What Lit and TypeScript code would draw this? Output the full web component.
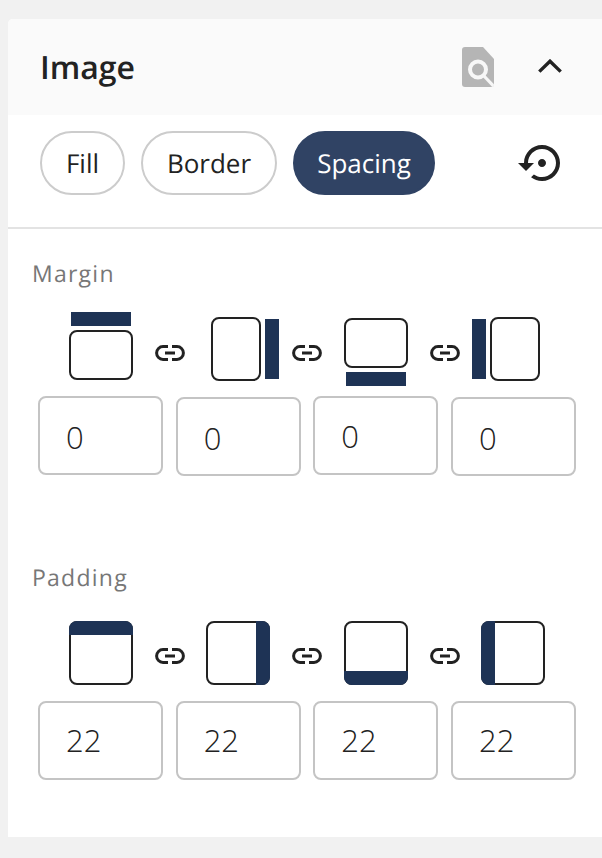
import { LitElement, html, css, svg } from "lit";
import { customElement } from "lit/decorators.js";

const NAVY = "#1e3355";
const INK = "#222222";

const box = (x: number, y: number, w: number, h: number) =>
  svg`<rect x=${x + 1} y=${y + 1} width=${w - 2} height=${h - 2} rx="7" fill="#fff" stroke=${INK} stroke-width="2"/>`;
const bar = (x: number, y: number, w: number, h: number) =>
  svg`<rect x=${x} y=${y} width=${w} height=${h} fill=${NAVY}/>`;
const fillPath = (d: string) => svg`<path d=${d} fill=${NAVY}/>`;

const frame = (vx: number, vy: number, h: number, body: unknown) =>
  html`<svg class="side" style="height:${h}px" viewBox="${vx} ${vy} 84 ${h}">${body}</svg>`;

const link = (tight: boolean) => html`<svg class="link ${tight ? "tight" : ""}" viewBox="0 0 30 16">
  <path d="M13 1.6H8a6.4 6.4 0 0 0 0 12.8h5M17 1.6h5a6.4 6.4 0 0 1 0 12.8h-5M10 8h10" fill="none" stroke=${INK} stroke-width="3"/>
</svg>`;

const marginIcons = [
  frame(59, 312, 74, svg`${bar(71, 312, 60, 14)}${box(69, 330, 64, 50)}`),
  frame(196, 312, 74, svg`${box(211, 317, 50, 64)}${bar(265, 319, 14, 60)}`),
  frame(334, 312, 74, svg`${box(344, 318, 64, 50)}${bar(346, 372, 60, 14)}`),
  frame(471, 312, 74, svg`${bar(472, 319, 14, 60)}${box(490, 317, 50, 64)}`),
];

const paddingIcons = [
  frame(59, 621, 64, svg`${box(69, 621, 64, 64)}${fillPath("M69 635v-6a8 8 0 0 1 8-8h48a8 8 0 0 1 8 8v6z")}`),
  frame(196, 621, 64, svg`${box(206, 621, 64, 64)}${fillPath("M256 621h6a8 8 0 0 1 8 8v48a8 8 0 0 1-8 8h-6z")}`),
  frame(334, 621, 64, svg`${box(344, 621, 64, 64)}${fillPath("M344 671v6a8 8 0 0 0 8 8h48a8 8 0 0 0 8-8v-6z")}`),
  frame(471, 621, 64, svg`${box(481, 621, 64, 64)}${fillPath("M495 621h-6a8 8 0 0 0-8 8v48a8 8 0 0 0 8 8h6z")}`),
];

@customElement("app-root")
export class AppRoot extends LitElement {
  static styles = css`
    :host {
      display: block;
      background: #f1f1f1;
      padding: 19px 0 21px 8px;
      font-family: "Open Sans", "Noto Sans", sans-serif;
      color: #222;
      text-rendering: geometricPrecision;
    }
    .panel {
      background: #fff;
      border-top-left-radius: 5px;
      height: 818px;
      overflow: hidden;
      opacity: 0.999;
    }
    .head {
      height: 96px;
      background: #fafafa;
      display: flex;
      align-items: center;
      padding-left: 32px;
    }
    .title {
      font-size: 32px;
      font-weight: 600;
      line-height: 40px;
      flex: 1;
      padding-top: 2px;
    }
    .doc {
      width: 32px;
      height: 40px;
    }
    .chev {
      width: 24px;
      height: 14px;
      margin: 0 40px 2px 44px;
    }
    .tabs {
      height: 112px;
      box-sizing: border-box;
      padding: 16px 36px 0 32px;
      display: flex;
      align-items: flex-start;
      gap: 16px;
    }
    .pill {
      height: 64px;
      box-sizing: border-box;
      border: 2px solid #cccccc;
      border-radius: 32px;
      font-size: 26px;
      line-height: 60px;
      text-align: center;
      background: #fff;
      color: #222;
    }
    .fill { width: 85px; }
    .border { width: 136px; }
    .spacing {
      width: 142px;
      background: #304364;
      border-color: #304364;
      color: #fff;
    }
    .reset {
      width: 48px;
      height: 48px;
      margin: 8px 0 0 auto;
    }
    .rule {
      height: 2px;
      background: #e3e3e3;
    }
    .label {
      font-size: 23px;
      line-height: 32px;
      color: #777;
      letter-spacing: 1.25px;
      padding-left: 24px;
    }
    .m-label { margin-top: 28px; }
    .p-label { margin-top: 85px; }
    .icons {
      display: flex;
      gap: 12px;
      padding-left: 51px;
      align-items: center;
    }
    .m-icons { margin-top: 23px; }
    .p-icons { margin-top: 28px; }
    .side {
      width: 84px;
      display: block;
      flex: none;
    }
    .link {
      width: 30px;
      height: 16px;
      flex: none;
      display: block;
      position: relative;
    }
    .tight { margin-right: -1px; }
    .m-icons .link { top: 4px; }
    .p-icons .link { top: 3px; }
    .inputs {
      display: grid;
      grid-template-columns: repeat(4, 125px);
      column-gap: 12.67px;
      padding-left: 30px;
      align-items: start;
    }
    .m-inputs { margin-top: 10px; }
    .p-inputs { margin-top: 16px; }
    .m-inputs .num:nth-child(even) { margin-top: 1px; }
    .num {
      width: 125px;
      height: 79px;
      box-sizing: border-box;
      border: 2px solid #c4c4c4;
      border-radius: 8px;
      padding: 2px 0 0 26px;
      font-family: inherit;
      font-size: 31px;
      font-weight: 300;
      color: #222;
      background: #fff;
      outline: none;
    }
    .m-inputs .num:nth-child(3) { padding-top: 0; }
    .p-inputs .num { padding: 0 0 2px 26px; }
  `;

  render() {
    return html`<div class="panel">
      <div class="head">
        <div class="title">Image</div>
        <svg class="doc" viewBox="0 0 32 40">
          <path d="M3 0H21L32 12V37a3 3 0 0 1-3 3H3a3 3 0 0 1-3-3V3a3 3 0 0 1 3-3z" fill="#b5b5b5"/>
          <circle cx="16" cy="22.5" r="8" fill="none" stroke="#f7f7f7" stroke-width="4"/>
          <path d="M22 29l9.5 10" stroke="#f7f7f7" stroke-width="3.2" fill="none"/>
        </svg>
        <svg class="chev" viewBox="0 0 24 14">
          <path d="M1.3 12.6L12 2.2l10.7 10.4" fill="none" stroke=${INK} stroke-width="3.4"/>
        </svg>
      </div>
      <div class="tabs">
        <div class="pill fill">Fill</div>
        <div class="pill border">Border</div>
        <div class="pill spacing">Spacing</div>
        <svg class="reset" viewBox="0 0 24 24">
          <path fill=${INK} d="M14 12c0-1.1-.9-2-2-2s-2 .9-2 2 .9 2 2 2 2-.9 2-2zm-2-9c-4.97 0-9 4.03-9 9H0l4 4 4-4H5c0-3.87 3.13-7 7-7s7 3.13 7 7-3.13 7-7 7c-1.51 0-2.91-.49-4.06-1.3l-1.42 1.44C8.04 20.3 9.94 21 12 21c4.97 0 9-4.03 9-9s-4.03-9-9-9z"/>
        </svg>
      </div>
      <div class="rule"></div>
      <div class="label m-label">Margin</div>
      <div class="icons m-icons">
        ${marginIcons[0]}${link(true)}${marginIcons[1]}${link(false)}${marginIcons[2]}${link(true)}${marginIcons[3]}
      </div>
      <div class="inputs m-inputs">
        ${["0", "0", "0", "0"].map((v) => html`<input class="num" .value=${v} />`)}
      </div>
      <div class="label p-label">Padding</div>
      <div class="icons p-icons">
        ${paddingIcons[0]}${link(true)}${paddingIcons[1]}${link(false)}${paddingIcons[2]}${link(true)}${paddingIcons[3]}
      </div>
      <div class="inputs p-inputs">
        ${["22", "22", "22", "22"].map((v) => html`<input class="num" .value=${v} />`)}
      </div>
    </div>`;
  }
}
